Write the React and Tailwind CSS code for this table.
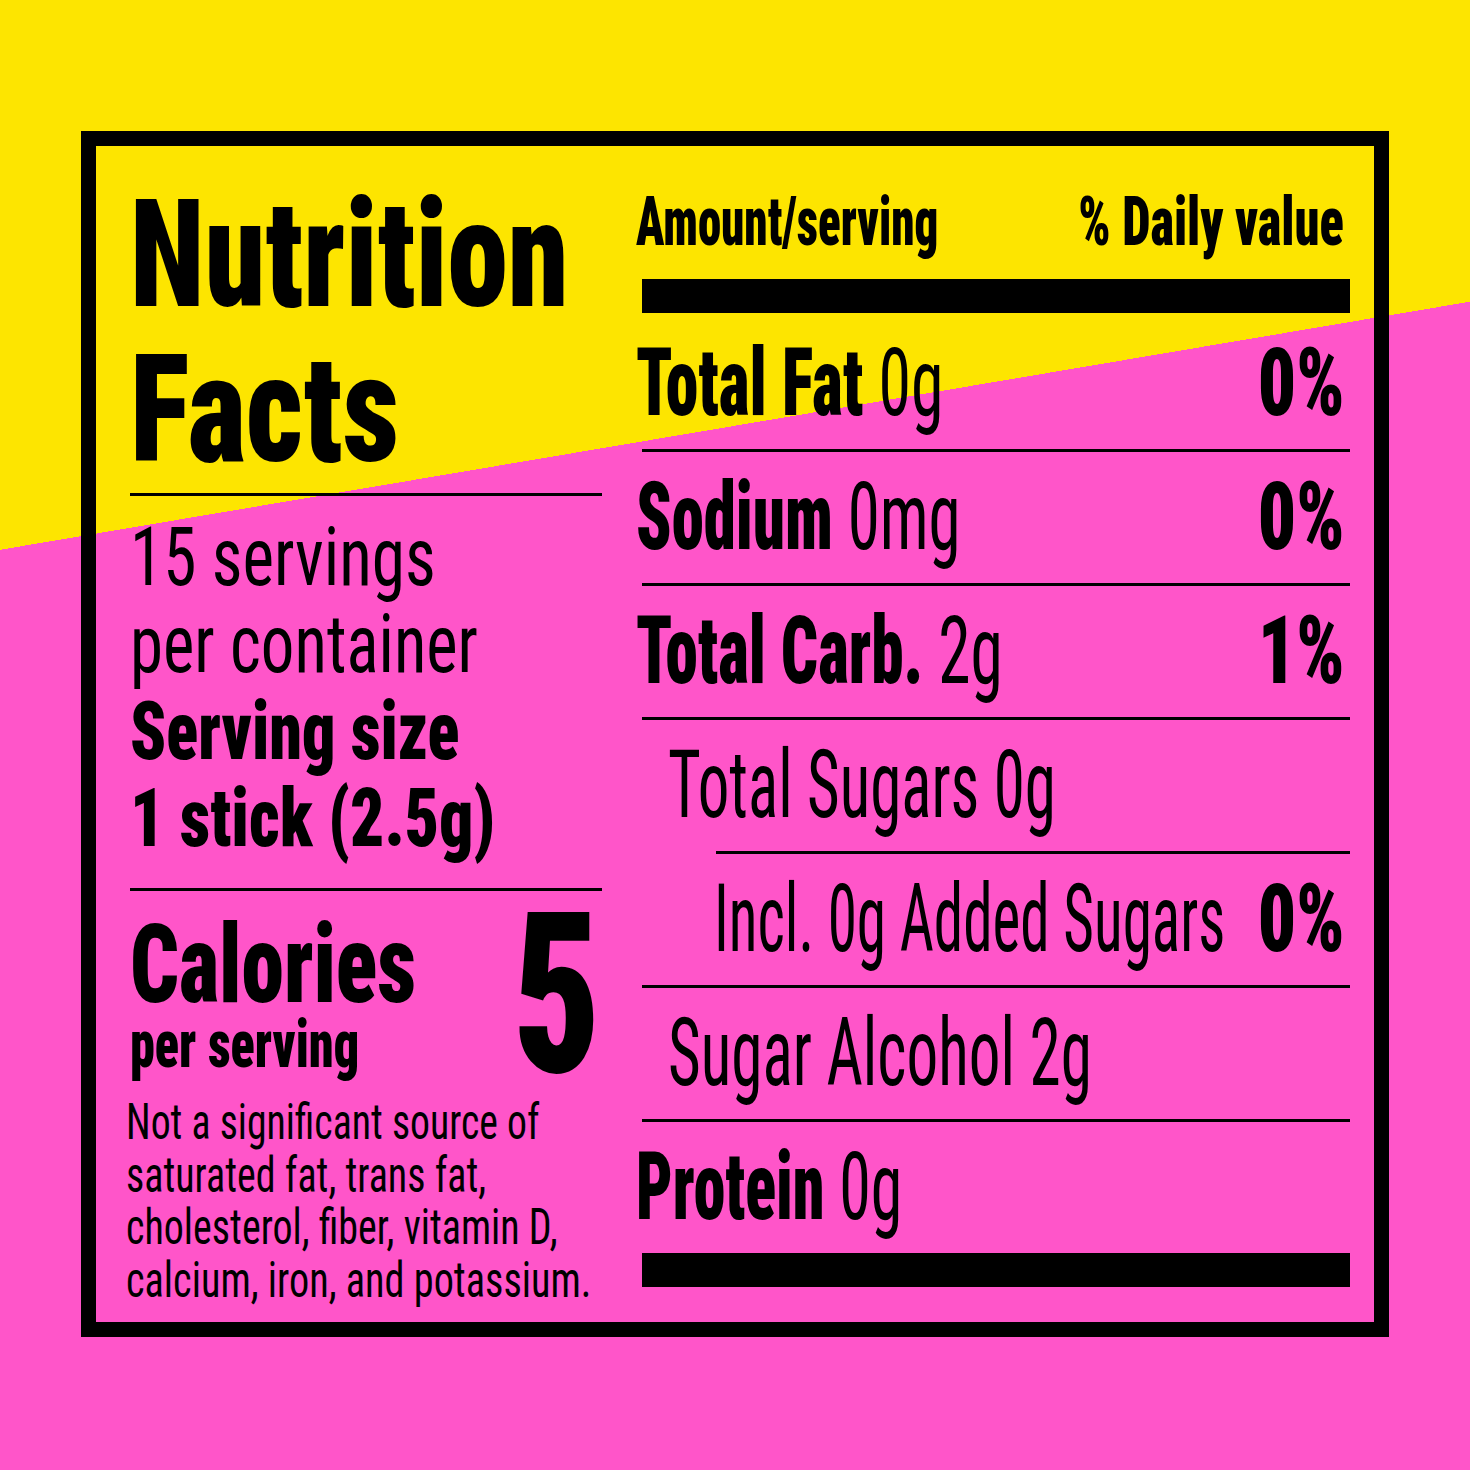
const rows = [
  { label: 'Total Fat', amount: '0g', dv: '0%', bold: true, squeeze: 'scale-x-[0.7]' },
  { label: 'Sodium', amount: '0mg', dv: '0%', bold: true, squeeze: 'scale-x-[0.69]' },
  { label: 'Total Carb.', amount: '2g', dv: '1%', bold: true, squeeze: 'scale-x-[0.695]' },
  { label: 'Total Sugars 0g', pad: 'pl-[32px]', squeeze: 'scale-x-[0.67]', ruleIndent: true },
  { label: 'Incl. 0g Added Sugars', dv: '0%', pad: 'pl-[78px]', squeeze: 'scale-x-[0.63]' },
  { label: 'Sugar Alcohol 2g', pad: 'pl-[32px]', squeeze: 'scale-x-[0.672]' },
];

function Rule({ className = '' }) {
  return <div className={'h-[3px] bg-black ' + className} />;
}

function NutrientRow({ row }) {
  return (
    <div className={'flex items-start h-[131px] leading-[131px] text-[94px] ' + (row.pad || '')}>
      <div className="flex-1 min-w-0">
        <span className={'inline-block origin-left whitespace-nowrap ' + row.squeeze}>
          {row.bold ? (
            <>
              <span className="font-black">{row.label}</span> {row.amount}
            </>
          ) : (
            row.label
          )}
        </span>
      </div>
      {row.dv && (
        <span className="shrink-0 inline-block origin-right scale-x-[0.8] whitespace-nowrap font-black mr-[5px]">
          {row.dv}
        </span>
      )}
    </div>
  );
}

export default function App() {
  return (
    <div className="w-[1470px] h-[1470px] pt-[131px] pl-[81px] bg-[linear-gradient(170.42deg,#fde500_32%,#ff55c9_32%)] text-black font-['Roboto_Condensed',sans-serif]">
      <div className="w-[1308px] h-[1206px] border-[15px] border-black flex">
        {/* Left column */}
        <div className="w-[472px] ml-[34px] pt-[32px] flex flex-col">
          <div className="text-[150px] leading-[155px] font-black">
            <div className="origin-left scale-x-[0.815] whitespace-nowrap">Nutrition</div>
            <div className="origin-left scale-x-[0.835] whitespace-nowrap">Facts</div>
          </div>
          <Rule className="mt-[5px]" />

          <div className="mt-[18px] text-[82px] leading-[87px]">
            <div className="origin-left scale-x-[0.82] whitespace-nowrap">15 servings</div>
            <div className="origin-left scale-x-[0.815] whitespace-nowrap">per container</div>
            <div className="origin-left scale-x-[0.805] whitespace-nowrap font-black">Serving size</div>
            <div className="origin-left scale-x-[0.82] whitespace-nowrap font-black">1 stick (2.5g)</div>
          </div>
          <Rule className="mt-[26px]" />

          <div className="mt-[24px] flex items-start">
            <div className="flex-1 min-w-0 flex flex-col">
              <div className="text-[110px] leading-[80px] mt-[10px] font-black origin-left scale-x-[0.78] whitespace-nowrap">
                Calories
              </div>
              <div className="text-[66px] leading-[56px] mt-[12px] font-black origin-left scale-x-[0.76] whitespace-nowrap">
                per serving
              </div>
            </div>
            <div className="shrink-0 text-[225px] leading-[160px] font-black origin-right scale-x-[0.76] mr-[1px]">5</div>
          </div>

          <div className="mt-[21px] -ml-[4px] text-[50px] leading-[52.5px]">
            <div className="origin-left scale-x-[0.795] whitespace-nowrap">Not a significant source of</div>
            <div className="origin-left scale-x-[0.8] whitespace-nowrap">saturated fat, trans fat,</div>
            <div className="origin-left scale-x-[0.8] whitespace-nowrap">cholesterol, fiber, vitamin D,</div>
            <div className="origin-left scale-x-[0.805] whitespace-nowrap">calcium, iron, and potassium.</div>
          </div>
        </div>

        {/* Right column */}
        <div className="w-[714px] ml-[34px] pt-[42px] flex flex-col">
          <div className="grid grid-cols-2 text-[68px] leading-[68px] font-black">
            <div className="min-w-0">
              <span className="inline-block origin-left scale-x-[0.69] whitespace-nowrap">Amount/serving</span>
            </div>
            <div className="min-w-0 flex justify-end pr-[6px]">
              <span className="shrink-0 inline-block origin-right scale-x-[0.74] whitespace-nowrap">% Daily value</span>
            </div>
          </div>
          <div className="mt-[23px] ml-[6px] h-[34px] bg-black" />

          <div className="mt-[5px]">
            {rows.map((row) => (
              <div key={row.label}>
                <NutrientRow row={row} />
                <Rule className={row.ruleIndent ? 'ml-[80px]' : 'ml-[6px]'} />
              </div>
            ))}
            <div className="h-[131px] leading-[131px] text-[94px]">
              <span className="inline-block origin-left scale-x-[0.68] whitespace-nowrap">
                <span className="font-black">Protein</span> 0g
              </span>
            </div>
            <div className="ml-[6px] h-[34px] bg-black" />
          </div>
        </div>
      </div>
    </div>
  );
}
